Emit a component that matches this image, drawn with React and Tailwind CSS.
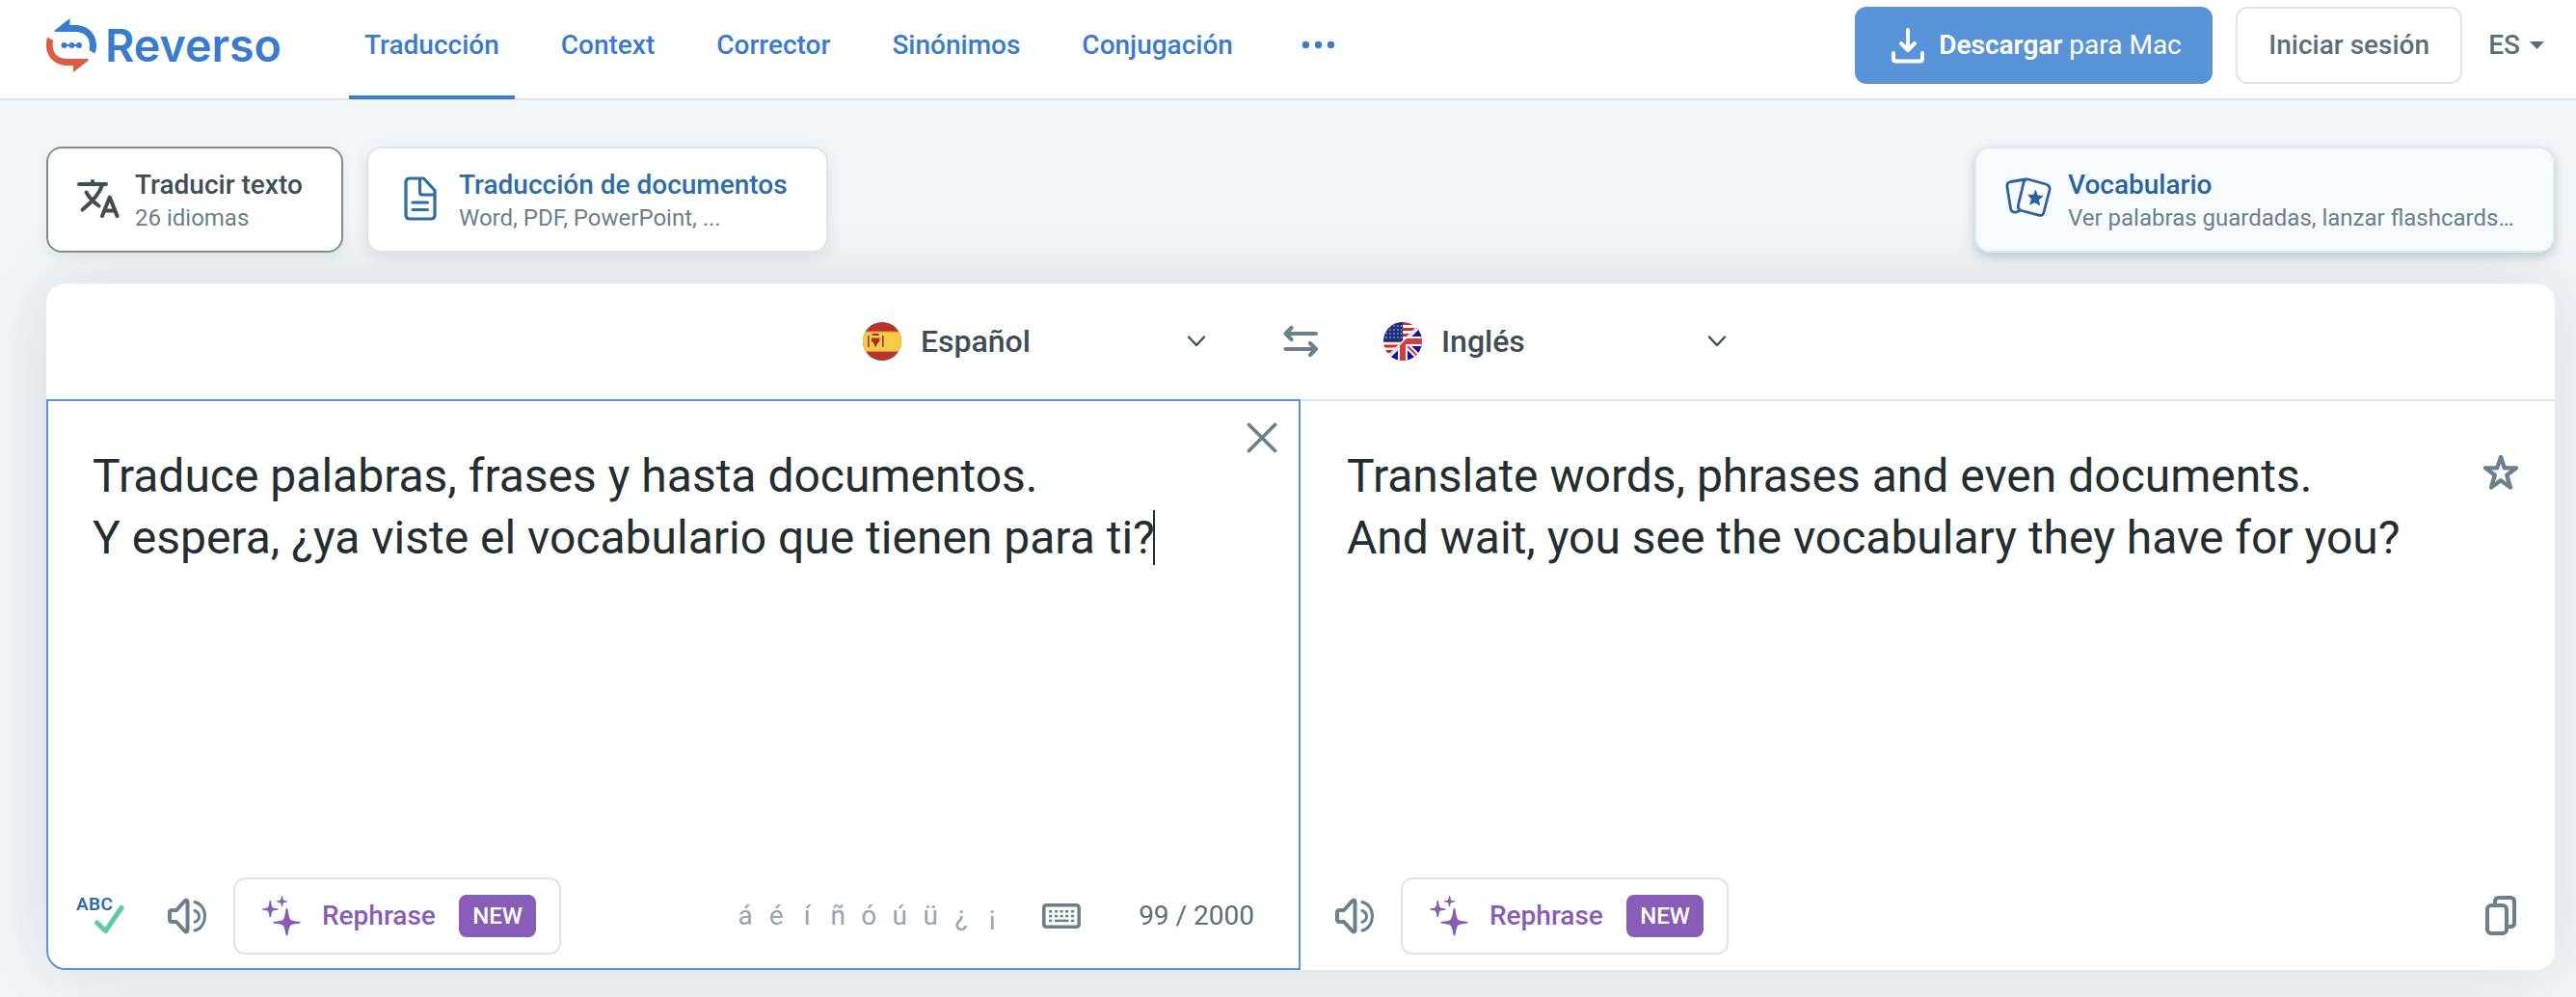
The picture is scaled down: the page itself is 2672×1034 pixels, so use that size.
import React from 'react';
import clsx from 'clsx';

const NAV_ITEMS = ['Traducción', 'Context', 'Corrector', 'Sinónimos', 'Conjugación'];
const SPECIAL_CHARS = ['á', 'é', 'í', 'ñ', 'ó', 'ú', 'ü', '¿', '¡'];

const Logo = () => (
  <div className="flex w-[314px] shrink-0 items-start pt-[19px]">
    <svg width="246" height="58" viewBox="0 0 246 58">
      <path
        fill="#3a7bd0"
        d="M24.500 0v7h5.500c13 0 22 9 22 21 0 3-.6 6-1.600 8.500l-6-3.500c.4-1.500.6-3 .6-5 0-9-6-14-15-14H9.500c-1 0-1.500-.8-.8-1.500z"
      />
      <path
        fill="#dc5d45"
        d="M28 56v-7h-6C9 49 0 40 0 28c0-3 .4-5.500 1.200-8.500l6 3.500c-.3 1.500-.5 3-.5 5 0 9 6.300 14 15.300 14h20.500c1.500 0 2 1 .8 2z"
      />
      <g fill="#3a7bd0">
        <circle cx="18.500" cy="28" r="3" />
        <circle cx="26.500" cy="28" r="3" />
        <circle cx="34" cy="28" r="3" />
        <path d="M18 27h16v2H18z" />
      </g>
      <text
        x="61"
        y="44.500"
        textLength="183"
        lengthAdjust="spacingAndGlyphs"
        fill="#3a7bd0"
        className="font-['Inter',sans-serif] text-[47px] font-semibold"
      >
        Reverso
      </text>
    </svg>
  </div>
);

const DownloadIcon = () => (
  <svg width="38" height="40" viewBox="0 0 38 40" fill="none" stroke="#fff" strokeWidth="4" strokeLinecap="round" strokeLinejoin="round">
    <path d="M19 4v20M12 18l7 7 7-7" />
    <path d="M4 28v5.500c0 2 1 3 3 3h24c2 0 3-1 3-3V28" />
  </svg>
);

const TranslateIcon = () => (
  <svg width="44" height="40" viewBox="0 0 44 40" fill="none" stroke="#3f4e55" strokeWidth="4" strokeLinecap="round" strokeLinejoin="round">
    <path d="M2 5h28M16 2v3M26 5.500C23.500 15 16 23 5.500 31.500M9.500 13.500c3 5.500 7.500 10 13 14" />
    <path d="M26 38l7.800-19.500L41.500 38M28.500 32.500h10.500" />
  </svg>
);

const DocumentIcon = () => (
  <svg width="34" height="46" viewBox="0 0 34 46" fill="none" stroke="#2e6cab" strokeWidth="3.200" strokeLinecap="round" strokeLinejoin="round">
    <path d="M6 2h14.500L32 14.500V40c0 2.500-1.500 4-4 4H6c-2.500 0-4-1.500-4-4V6c0-2.500 1.500-4 4-4z" />
    <path d="M16.500 2.500V16c0 2 .8 3 2.800 3H31.500M9 27h15.500M9 34.500h15.500" />
  </svg>
);

const FlashcardsIcon = () => (
  <svg width="48" height="42" viewBox="0 0 48 42" fill="none" stroke="#2963a3" strokeWidth="2.800" strokeLinecap="round" strokeLinejoin="round">
    <path d="M24 2l18 5c3 1 4.500 3 4 6l-6 23c-.7 3-2.500 4-5.500 3.200L17 34.500c-3-1-4.200-3-3.500-6L19 5.500C19.800 2.500 21.500 1.300 24 2z" />
    <path d="M21 2L5.500 4.500C3 5 1.500 7 2 10l3.500 22c.5 3 2.500 4.500 5.500 4l3-.8" />
    <path
      fill="#2963a3"
      strokeWidth="0.800"
      d="M31.500 13.500l1.800 5.200 5.700.8-4.300 3.600.8 5.700-4.800-3-5 2.200 1.600-5.500-3.500-4.200 5.500-.2z"
    />
  </svg>
);

const SpeakerIcon = () => (
  <svg width="42" height="38" viewBox="0 0 42 38" fill="none" stroke="#6a808d" strokeLinecap="round" strokeLinejoin="round">
    <path strokeWidth="4" d="M2 15.500c0-1.700.8-2.500 2.500-2.500H9l8.500-9.500c1.500-1.600 3-1.200 3 1v29c0 2.200-1.500 2.600-3 1L9 25H4.500C2.800 25 2 24.200 2 22.500z" />
    <path strokeWidth="3" d="M28 13.500c2.500.8 4.500 3 4.500 6s-2 5-4.500 5.800M28 4.500c6.500 1.500 10.500 7.500 10.500 14.500S34.500 32.500 28 34" />
  </svg>
);

const SpellcheckIcon = () => (
  <svg className="-ml-0.5 overflow-visible" width="52" height="42" viewBox="-2 0 52 42">
    <text x="-1" y="14.500" fill="#2e6cab" textLength="38" className="font-[Roboto,sans-serif] text-[19px] font-semibold">
      ABC
    </text>
    <path d="M20.500 28l9 8.500L46 12.500" fill="none" stroke="#5cc9a8" strokeWidth="5" strokeLinecap="round" strokeLinejoin="round" />
  </svg>
);

const SparklesIcon = () => (
  <svg width="40" height="42" viewBox="0 0 40 42" fill="#885db8">
    <path d="M25.500 13c.6 0 1 .6 1.200 2 1 7.500 2 9.500 3.500 10.300 1.500.8 3.500 1 7.800 1.500 2.500.3 2.500 1.600 0 1.900-4.300.5-6.300.7-7.800 1.500-1.500.8-2.500 2.800-3.500 9.300-.4 2.500-2 2.500-2.400 0-1-6.500-2-8.500-3.500-9.300-1.500-.8-3.500-1-7.800-1.500-2.500-.3-2.500-1.600 0-1.900 4.300-.5 6.300-.7 7.800-1.500 1.500-.8 2.500-2.800 3.500-10.300.2-1.400.6-2 1.200-2z" />
    <path d="M8.300 5c.5 0 .8.500.9 1.300.7 6.200 1 6.400 6.400 7 1.600.2 1.600 1.200 0 1.400-5.400.6-5.700.8-6.400 6.500-.2 1.500-1.600 1.500-1.800 0-.7-5.700-1-5.900-6.400-6.500-1.600-.2-1.600-1.200 0-1.400 5.400-.6 5.700-.8 6.400-7 .1-.8.400-1.300.9-1.300z" />
    <path d="M20.500 0c.3 0 .6.300.7.900.4 3.600.6 4 4.300 4.400 1.200.1 1.200 1 0 1.100-3.700.4-3.900.8-4.300 4-.1 1.100-1.300 1.100-1.400 0-.4-3.200-.6-3.600-4.300-4-1.200-.1-1.200-1 0-1.100 3.700-.4 3.900-.8 4.300-4.400.1-.6.4-.9.700-.9z" />
  </svg>
);

const KeyboardIcon = () => (
  <svg width="40" height="26" viewBox="0 0 40 26">
    <rect x="1.800" y="1.800" width="36.400" height="22.400" rx="2.500" fill="none" stroke="#6a808d" strokeWidth="3.600" />
    <g fill="#6a808d">
      {[7, 13, 18.500, 24, 30].map((x) => (
        <React.Fragment key={x}>
          <rect x={x} y="7" width="3.200" height="2.500" />
          <rect x={x} y="11.800" width="3.200" height="2.500" />
        </React.Fragment>
      ))}
      <rect x="7" y="16.600" width="3.200" height="2.600" />
      <rect x="13" y="16.600" width="14.500" height="2.600" />
      <rect x="30" y="16.600" width="3.200" height="2.600" />
    </g>
  </svg>
);

const CloseIcon = () => (
  <svg width="32" height="32" viewBox="0 0 32 32" stroke="#6a808d" strokeWidth="3.800" strokeLinecap="round">
    <path d="M2.500 2.500l27 27M29.500 2.500l-27 27" />
  </svg>
);

const StarIcon = () => (
  <svg width="38" height="38" viewBox="0 0 38 38" fill="none" stroke="#6a808d" strokeWidth="4.300" strokeLinejoin="round">
    <path d="M19 3l3.800 11.400H35l-9.800 7.400L29 34.500l-10-7.200-10 7.200 3.800-12.700L3 14.400h12.200z" />
  </svg>
);

const CopyIcon = () => (
  <svg width="32" height="42" viewBox="0 0 32 42" fill="none" stroke="#6a808d" strokeWidth="4">
    <rect x="2" y="10" width="20" height="29" rx="4" />
    <path d="M10 10V6c0-2.500 1.500-4 4-4h12c2.500 0 4 1.500 4 4v22c0 2.500-1.500 4-4 4h-4" />
  </svg>
);

const SwapIcon = () => (
  <svg width="38" height="34" viewBox="0 0 38 34" fill="none" stroke="#6a808d" strokeWidth="4.200" strokeLinecap="round" strokeLinejoin="round">
    <path d="M35 9H3.500M9.500 3L3.500 9l6 6M3.500 25H35M29 19l6 6-6 6" />
  </svg>
);

const ChevronIcon = () => (
  <svg width="20" height="12" viewBox="0 0 20 12" fill="none" stroke="#3f4e55" strokeWidth="2.400" strokeLinecap="round" strokeLinejoin="round">
    <path d="M2 1.500l8 8.500 8-8.500" />
  </svg>
);

const SpainFlag = () => (
  <svg width="40" height="40" viewBox="0 0 40 40">
    <clipPath id="es-clip">
      <circle cx="20" cy="20" r="20" />
    </clipPath>
    <g clipPath="url(#es-clip)">
      <path fill="#b7332e" d="M0 0h40v40H0z" />
      <path fill="#f7c948" d="M0 10h40v20H0z" />
      <path fill="#dd8a3a" d="M0 9.500h40v1H0zM0 30h40v1H0z" />
      <g fill="#a5302a">
        <path d="M5 14h1.600v12H5zM20 14h1.600v12H20zM9.500 12.500c2-1 5.500-1 7.500 0v1.500H9.500z" />
        <path d="M9 16.500h8.500v3.500l-2 1.500L13.200 26.500 11 21.500 9 20z" />
      </g>
    </g>
  </svg>
);

const EnglishFlag = () => (
  <svg width="40" height="40" viewBox="0 0 40 40">
    <clipPath id="en-clip">
      <circle cx="20" cy="20" r="20" />
    </clipPath>
    <clipPath id="uk-half">
      <path d="M40 0v40H0z" />
    </clipPath>
    <g clipPath="url(#en-clip)">
      <path fill="#fff" d="M0 0h40v40H0z" />
      <path fill="#c9302c" d="M0 0h40v3H0zM0 6h40v3H0zM0 12h40v3H0zM0 18h40v3H0zM0 23.500h40v3H0zM0 29h40v3H0z" />
      <path fill="#1b2f7d" d="M0 0h20v20H0z" />
      <g fill="#c3cbe4">
        {[4, 8, 12, 16].map((y) =>
          [3, 7, 11, 15, 18.500].map((x) => <circle key={`${x}-${y}`} cx={x} cy={y} r="0.800" />)
        )}
      </g>
      <g clipPath="url(#uk-half)">
        <path fill="#1414a0" d="M0 0h40v40H0z" />
        <path stroke="#fff" strokeWidth="6" d="M0 0l40 40M40 0L0 40" />
        <path stroke="#d63a45" strokeWidth="2" d="M0 0l40 40M40 0L0 40" />
        <path fill="#fff" d="M15 0h10v40H15zM0 15h40v10H0z" />
        <path fill="#d63a45" d="M17 0h6v40h-6zM0 17h40v6H0z" />
      </g>
      <path stroke="#fff" strokeWidth="1.500" d="M40 0L0 40" />
    </g>
  </svg>
);

const ModeCard = ({ icon, title, subtitle, className, titleClass }) => (
  <div className={clsx('flex h-[110px] items-start rounded-2xl border-2 pt-[22px]', className)}>
    {icon}
    <div className="whitespace-nowrap">
      <p className={clsx('text-[28px] font-medium leading-8', titleClass)}>{title}</p>
      <p className="mt-0.5 text-2xl leading-8 text-[#6a808d]">{subtitle}</p>
    </div>
  </div>
);

const LanguageSelect = ({ flag, label }) => (
  <div className="flex w-[356px] items-center">
    {flag}
    <span className="ml-5 flex-1 text-[32px] font-medium leading-10 text-[#3f4e55]">{label}</span>
    <ChevronIcon />
  </div>
);

const RephraseButton = () => (
  <button className="flex h-20 w-[340px] items-center rounded-xl border-2 border-[#dfe4e7] pl-7">
    <SparklesIcon />
    <span className="ml-[22px] text-[28px] font-medium leading-8 text-[#885db8]">Rephrase</span>
    <span className="ml-auto mr-6 flex h-11 w-20 items-center justify-center rounded-lg bg-[#885db8] text-2xl font-medium text-white">
      NEW
    </span>
  </button>
);

const Header = () => (
  <header className="flex h-[104px] items-start bg-white pl-12 shadow-[inset_0_-2px_0_#dfe4e7]">
    <Logo />
    <nav className="flex gap-8">
      {NAV_ITEMS.map((item, index) => (
        <a
          key={item}
          className={clsx(
            'h-[103px] border-b-4 px-4 pt-[31px] text-[28px] font-medium leading-8 text-[#3a7bd0]',
            index === 0 ? 'border-[#3a7bd0]' : 'border-transparent'
          )}
        >
          {item}
        </a>
      ))}
      <svg className="ml-[22px] mt-[42px]" width="36" height="9" viewBox="0 0 36 9" fill="#3a7bd0">
        <circle cx="5.500" cy="4.500" r="3.700" />
        <circle cx="18.500" cy="4.500" r="3.700" />
        <circle cx="31.500" cy="4.500" r="3.700" />
      </svg>
    </nav>
    <div className="ml-auto mr-[33px] flex items-center pt-[7px]">
      <button className="flex h-20 w-[371px] items-center rounded-xl bg-[#5994d9] pl-9 text-[28px] leading-8 text-white">
        <DownloadIcon />
        <span className="ml-[13px] whitespace-nowrap">
          <span className="font-semibold">Descargar</span> para Mac
        </span>
      </button>
      <button className="ml-6 h-20 w-[235px] rounded-xl border-2 border-[#dfe4e7] text-[28px] font-medium leading-8 text-[#5a6f7b]">
        Iniciar sesión
      </button>
      <div className="ml-[27px] flex items-center text-[28px] font-medium leading-8 text-[#5a6f7b]">
        ES
        <svg className="ml-2.5" width="15" height="8" viewBox="0 0 15 8" fill="#5a6f7b">
          <path d="M0 0h15L7.500 8z" />
        </svg>
      </div>
    </div>
  </header>
);

const SourcePane = () => (
  <section className="flex w-[1301px] flex-col rounded-bl-[20px] border-2 border-[#5994d9]">
    <div className="flex flex-1 items-start justify-between pl-[46px] pr-[22px]">
      <p className="whitespace-nowrap pt-[46px] text-5xl leading-[64px] text-[#242d30]">
        Traduce palabras, frases y hasta documentos.
        <br />
        Y espera, ¿ya viste el vocabulario que tienen para ti?
        {/* text cursor */}
        <span className="-my-3 -ml-0.5 inline-block h-[57px] w-0.5 bg-[#242d30] align-baseline" />
      </p>
      <div className="pt-[22px]">
        <CloseIcon />
      </div>
    </div>
    <div className="mb-3.5 flex h-20 items-center pl-[30px] pr-[46px]">
      <SpellcheckIcon />
      <div className="ml-11 mr-[26px]">
        <SpeakerIcon />
      </div>
      <RephraseButton />
      <div className="ml-auto flex text-[28px] leading-8 text-[#94a5af]">
        {SPECIAL_CHARS.map((char) => (
          <span key={char} className="w-8 text-center">
            {char}
          </span>
        ))}
      </div>
      <div className="ml-9 mr-[60px]">
        <KeyboardIcon />
      </div>
      <span className="text-[28px] leading-8 text-[#5a6f7b]">99 / 2000</span>
    </div>
  </section>
);

const TargetPane = () => (
  <section className="flex flex-1 flex-col border-t-2 border-[#dfe4e7]">
    <div className="flex flex-1 items-start justify-between pl-12 pr-[37px]">
      <p className="whitespace-nowrap pt-[46px] text-5xl leading-[64px] text-[#242d30]">
        Translate words, phrases and even documents.
        <br />
        And wait, you see the vocabulary they have for you?
      </p>
      <div className="pt-[55px]">
        <StarIcon />
      </div>
    </div>
    <div className="mb-4 flex h-20 items-center pl-9 pr-10">
      <div className="mr-[26px]">
        <SpeakerIcon />
      </div>
      <RephraseButton />
      <div className="ml-auto">
        <CopyIcon />
      </div>
    </div>
  </section>
);

const App = () => (
  <div className="h-[1034px] w-[2672px] overflow-hidden bg-[#f2f6f9] font-[Roboto,sans-serif]">
    <Header />
    <main className="pl-12 pr-[22px] pt-12">
      <div className="relative z-10 flex">
        <ModeCard
          icon={<div className="ml-[30px] mr-4 mt-2.5"><TranslateIcon /></div>}
          title="Traducir texto"
          subtitle="26 idiomas"
          titleClass="text-[#3f4e55]"
          className="w-[308px] border-[#7a8f9b] bg-white shadow-[0_4px_12px_rgba(60,80,95,0.08)]"
        />
        <ModeCard
          icon={<div className="ml-[37px] mr-[23px] mt-[7px]"><DocumentIcon /></div>}
          title="Traducción de documentos"
          subtitle="Word, PDF, PowerPoint, ..."
          titleClass="text-[#2e6cab]"
          className="ml-6 w-[479px] border-[#dfe4e7] bg-white shadow-[0_4px_16px_rgba(60,80,95,0.12)]"
        />
        <ModeCard
          icon={<div className="ml-[30px] mr-[17px] mt-2"><FlashcardsIcon /></div>}
          title="Vocabulario"
          subtitle="Ver palabras guardadas, lanzar flashcards…"
          titleClass="text-[#2963a3]"
          className="ml-auto w-[602px] border-[#dbe9f8] bg-[#f7faff] shadow-[0_4px_12px_rgba(60,80,95,0.28)]"
        />
      </div>
      <div className="mt-8 flex h-[712px] flex-col rounded-[20px] bg-white shadow-[0_0_80px_rgba(40,55,65,0.14)]">
        <div className="flex h-[120px] items-center pl-[847px]">
          <LanguageSelect flag={<SpainFlag />} label="Español" />
          <div className="ml-[79px] mr-[67px]">
            <SwapIcon />
          </div>
          <LanguageSelect flag={<EnglishFlag />} label="Inglés" />
        </div>
        <div className="flex flex-1">
          <SourcePane />
          <TargetPane />
        </div>
      </div>
    </main>
  </div>
);

export default App;
